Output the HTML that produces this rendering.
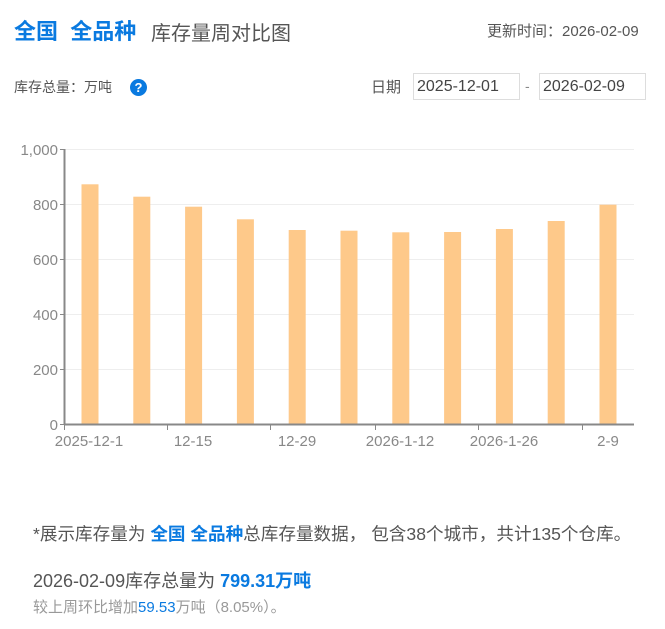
<!DOCTYPE html>
<html><head><meta charset="utf-8"><style>
*{margin:0;padding:0;box-sizing:border-box}
body{width:665px;height:629px;background:#fff;font-family:"Liberation Sans","Noto Sans CJK SC",sans-serif;color:#555;position:relative;overflow:hidden}
.a{position:absolute;white-space:nowrap}
.blue{color:#0a7ae0}
.inp{position:absolute;border:1px solid #ddd;height:27px;width:107px;font-size:16px;line-height:25px;padding-left:3px;color:#444}
</style></head><body>
<div class="a" style="left:14px;top:14px;font-size:22px;font-weight:bold;color:#0a7ae0">全国&nbsp;&nbsp;全品种</div>
<div class="a" style="left:151px;top:17px;font-size:20px;color:#555">库存量周对比图</div>
<div class="a" style="left:487px;top:20px;font-size:15px;color:#555">更新时间：2026-02-09</div>
<div class="a" style="left:14px;top:77px;font-size:14px;color:#555">库存总量：万吨</div>
<div class="a" style="left:130px;top:79px;width:17px;height:17px;border-radius:50%;background:#0a7ae0;color:#fff;font-size:13px;font-weight:bold;text-align:center;line-height:17px">?</div>
<div class="a" style="left:371px;top:76px;font-size:15px;color:#555">日期</div>
<div class="inp" style="left:413px;top:73px">2025-12-01</div>
<div class="a" style="left:525px;top:78px;font-size:14px;color:#888">-</div>
<div class="inp" style="left:539px;top:73px">2026-02-09</div>
<svg class="a" style="left:0;top:0" width="665" height="470">
<g stroke="#eee" stroke-width="1">
<line x1="64" y1="149.5" x2="634" y2="149.5"/><line x1="64" y1="204.5" x2="634" y2="204.5"/><line x1="64" y1="259.5" x2="634" y2="259.5"/><line x1="64" y1="314.5" x2="634" y2="314.5"/><line x1="64" y1="369.5" x2="634" y2="369.5"/></g>
<g fill="#fec98a">
<rect x="81.5" y="184.3" width="17" height="239.7"/>
<rect x="133.3" y="196.7" width="17" height="227.3"/>
<rect x="185.1" y="206.7" width="17" height="217.3"/>
<rect x="236.9" y="219.3" width="17" height="204.7"/>
<rect x="288.7" y="230" width="17" height="194"/>
<rect x="340.5" y="230.7" width="17" height="193.3"/>
<rect x="392.3" y="232.3" width="17" height="191.7"/>
<rect x="444.1" y="232" width="17" height="192"/>
<rect x="495.9" y="229" width="17" height="195"/>
<rect x="547.7" y="221" width="17" height="203"/>
<rect x="599.5" y="204.7" width="17" height="219.3"/></g>
<line x1="64.5" y1="149" x2="64.5" y2="425" stroke="#888" stroke-width="2"/>
<line x1="64" y1="424.5" x2="634" y2="424.5" stroke="#888" stroke-width="2"/>
<g stroke="#888" stroke-width="1">
<line x1="60" y1="149.5" x2="64" y2="149.5"/><line x1="60" y1="204.5" x2="64" y2="204.5"/><line x1="60" y1="259.5" x2="64" y2="259.5"/><line x1="60" y1="314.5" x2="64" y2="314.5"/><line x1="60" y1="369.5" x2="64" y2="369.5"/><line x1="60" y1="424.5" x2="64" y2="424.5"/>
<line x1="167.5" y1="424" x2="167.5" y2="430"/><line x1="270.5" y1="424" x2="270.5" y2="430"/><line x1="375.5" y1="424" x2="375.5" y2="430"/><line x1="478.5" y1="424" x2="478.5" y2="430"/><line x1="582.5" y1="424" x2="582.5" y2="430"/><line x1="64.5" y1="424" x2="64.5" y2="430"/></g>
<g font-family="Liberation Sans, sans-serif" font-size="15" fill="#888" text-anchor="end">
<text x="58" y="155">1,000</text><text x="58" y="210">800</text><text x="58" y="265">600</text><text x="58" y="320">400</text><text x="58" y="375">200</text><text x="58" y="430">0</text></g>
<g font-family="Liberation Sans, sans-serif" font-size="15" fill="#888" text-anchor="middle">
<text x="89" y="446">2025-12-1</text><text x="193" y="446">12-15</text><text x="297" y="446">12-29</text><text x="400" y="446">2026-1-12</text><text x="504" y="446">2026-1-26</text><text x="608" y="446">2-9</text></g>
</svg>
<div class="a" style="left:33px;top:521px;font-size:17.6px;color:#555">*展示库存量为 <b class="blue">全国 全品种</b>总库存量数据， 包含38个城市，共计135个仓库。</div>
<div class="a" style="left:33px;top:567px;font-size:18px;color:#555">2026-02-09库存总量为 <b class="blue">799.31万吨</b></div>
<div class="a" style="left:33px;top:596px;font-size:15px;color:#999">较上周环比增加<span class="blue">59.53</span>万吨（8.05%）。</div>
</body></html>
